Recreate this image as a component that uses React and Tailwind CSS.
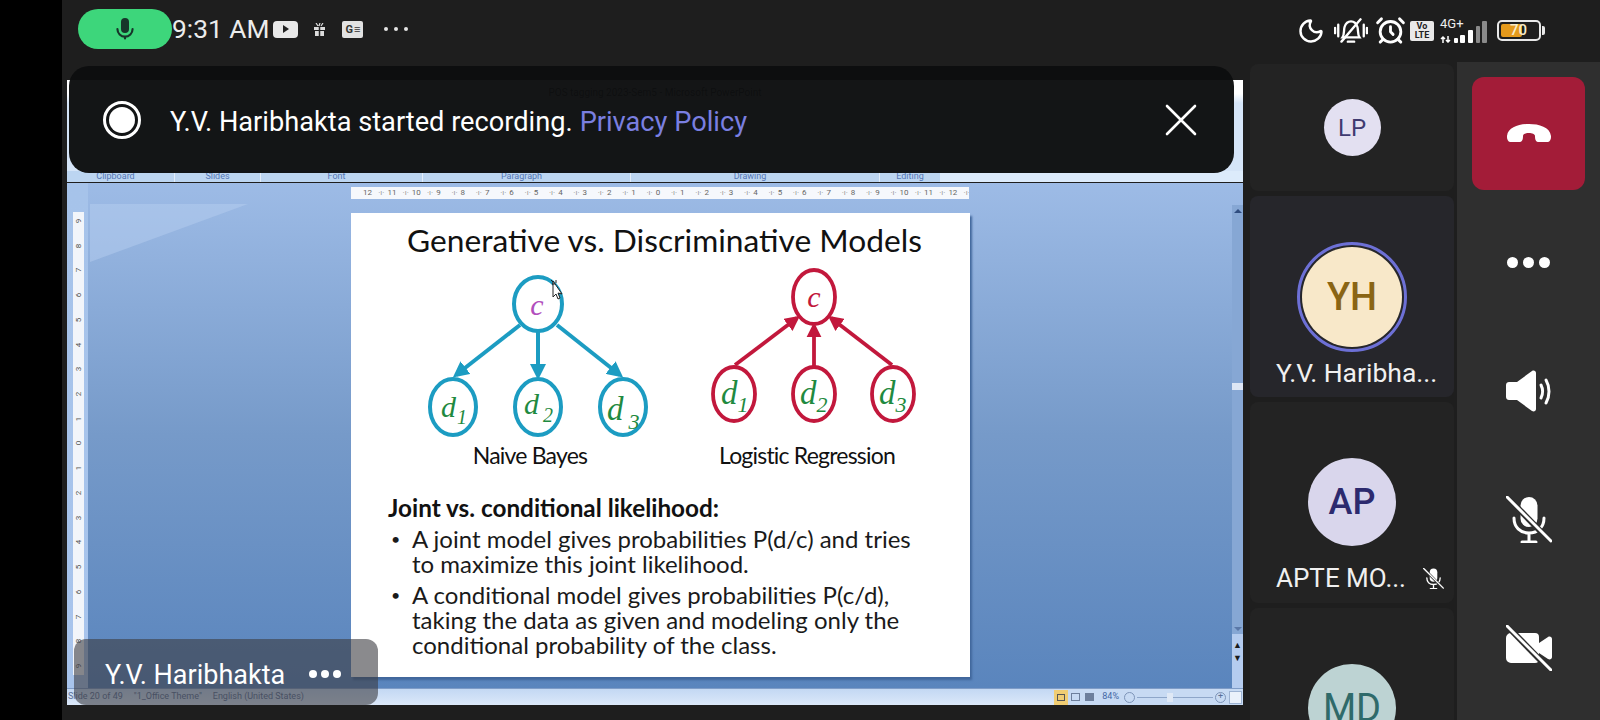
import { AlarmClock, Moon } from 'lucide-react';

const rulerTop = [12, 11, 10, 9, 8, 7, 6, 5, 4, 3, 2, 1, 0, 1, 2, 3, 4, 5, 6, 7, 8, 9, 10, 11, 12];
const rulerSide = [9, 8, 7, 6, 5, 4, 3, 2, 1, 0, 1, 2, 3, 4, 5, 6, 7, 8, 9];
const ribbonGroups = [
  { label: 'Clipboard', w: 'w-[108px] pr-[10px]' },
  { label: 'Slides', w: 'w-[86px]' },
  { label: 'Font', w: 'w-[162px] pr-[10px]' },
  { label: 'Paragraph', w: 'w-[208px] pr-[10px]' },
  { label: 'Drawing', w: 'w-[249px] pr-[10px]' },
];

function MicGlyph({ className }) {
  return (
    <svg viewBox="0 0 24 28" className={className}>
      <rect x="7.5" y="1" width="9" height="17" rx="4.5" fill="currentColor" />
      <path d="M3.5 13.5a8.5 8.5 0 0 0 17 0" fill="none" stroke="currentColor" strokeWidth="2.4" strokeLinecap="round" />
      <path d="M12 22v3" stroke="currentColor" strokeWidth="2.4" />
    </svg>
  );
}

function MutedMic({ className }) {
  return (
    <svg viewBox="0 0 46 47" className={className} fill="none">
      <rect x="14.5" y="1" width="17" height="30" rx="8.5" fill="white" />
      <path d="M8 22c0 9 6 15 15 15s15-6 15-15M23 37v9M16 46h14" stroke="white" strokeWidth="3" strokeLinecap="round" />
      <path d="M3 3l41 42" stroke="#2f2f2f" strokeWidth="6" />
      <path d="M1 1l44 44" stroke="white" strokeWidth="3" strokeLinecap="round" />
    </svg>
  );
}

function Avatar({ initials, className, ring }) {
  const circle = (
    <div className={`flex shrink-0 items-center justify-center rounded-full ${className}`}>{initials}</div>
  );
  if (!ring) return circle;
  return <div className="rounded-full border-[3px] border-[#6d70d6] p-[2px]">{circle}</div>;
}

function StatusIcons() {
  return (
    <div className="ml-auto mr-[55px] mt-[3px] flex items-center text-white">
      <Moon className="h-[28px] w-[28px]" strokeWidth={2.1} />
      <svg viewBox="0 0 32 26" className="ml-[9px] h-[28px] w-[34px]" fill="none" stroke="white" strokeWidth="2.2" strokeLinecap="round">
        <path d="M8 19c2-3 1-7 2-10 1-3 3-5 6-5s5 2 6 5c1 3 0 7 2 10z" />
        <path d="M13 23h6M7 23L25 2M1 10v5M4 7v11M28 7v11M31 10v5" />
      </svg>
      <AlarmClock className="ml-[7px] h-[31px] w-[31px]" strokeWidth={2.2} />
      <div className="ml-[4px] flex h-[20px] w-[24px] flex-col items-center justify-center rounded-[2px] bg-[#e9e9e9] text-[9px] font-bold leading-[9px] text-[#222]">
        <span>Vo</span>
        <span>LTE</span>
      </div>
      <div className="relative ml-[6px] h-[24px] w-[47px]">
        <span className="absolute -top-[2px] left-0 text-[13px] leading-[13px] text-[#eee]">4G+</span>
        <svg viewBox="0 0 47 22" className="absolute left-0 top-[2px] h-[22px] w-[47px]">
          <path d="M3 16v6M1 18l2-2 2 2M8 15v6M6 19l2 2 2-2" fill="none" stroke="white" strokeWidth="1.5" />
          <rect x="14" y="17" width="4" height="5" rx="1" fill="white" />
          <rect x="20" y="14" width="5" height="8" rx="1" fill="white" />
          <rect x="28" y="9" width="5" height="13" rx="1" fill="white" />
          <rect x="36" y="5" width="4" height="17" rx="1" fill="#8a8a8a" />
          <rect x="42" y="0" width="5" height="22" rx="1" fill="#8a8a8a" />
        </svg>
      </div>
      <div className="ml-[10px] flex items-center">
        <div className="relative h-[21px] w-[44px] rounded-[5px] border-2 border-[#e8e8e8] p-[2px]">
          <div className="h-full w-[21px] rounded-[2px] bg-[#e59a1c]" />
          <span className="absolute inset-y-0 left-[11px] flex items-center text-[15px] font-medium text-[#f8ecc9]">70</span>
        </div>
        <div className="ml-[1px] h-[9px] w-[3px] rounded-r-[2px] bg-[#e8e8e8]" />
      </div>
    </div>
  );
}

function TopBar() {
  return (
    <header className="flex h-[62px] shrink-0 items-center pb-[4px] text-white">
      <div className="ml-[16px] flex h-[40px] w-[94px] items-center justify-center rounded-full bg-[#3dd67b] text-[#17352a]">
        <MicGlyph className="h-[25px] w-[22px]" />
      </div>
      <span className="text-[26.3px] leading-none text-[#ececec]">9:31 AM</span>
      <div className="ml-[4px] flex h-[17px] w-[25px] items-center justify-center rounded-[4px] bg-[#e8e8e8]">
        <div className="ml-[1px] h-0 w-0 border-y-[4px] border-l-[6px] border-y-transparent border-l-[#222]" />
      </div>
      <svg viewBox="0 0 13 13" className="ml-[15px] h-[13px] w-[13px]">
        <path d="M3 0l2 3M7 0L6 3M10 0L8 3" stroke="#ddd" strokeWidth="1.2" />
        <path d="M1 4h11v3H1zM2 8h9v5H2z" fill="#ddd" />
        <path d="M6.5 4v9" stroke="#222" strokeWidth="1.5" />
      </svg>
      <div className="ml-[16px] flex h-[17px] w-[21px] items-center justify-center gap-[1px] rounded-[2px] bg-[#e2e2e2] text-[11px] font-bold leading-none text-[#333]">
        G<span className="text-[11px] leading-none">≡</span>
      </div>
      <div className="ml-[21px] flex gap-[6px]">
        <div className="h-[4px] w-[4px] rounded-full bg-[#e4e4e4]" />
        <div className="h-[4px] w-[4px] rounded-full bg-[#e4e4e4]" />
        <div className="h-[4px] w-[4px] rounded-full bg-[#e4e4e4]" />
      </div>
      <StatusIcons />
    </header>
  );
}

function Diagram() {
  return (
    <svg viewBox="351 262 619 213" className="h-[213px] w-[619px] shrink-0">
      <defs>
        <marker id="arrowBlue" markerWidth="4" markerHeight="4" refX="3" refY="2" orient="auto">
          <path d="M0 0L4 2L0 4z" fill="#1c9cc2" />
        </marker>
        <marker id="arrowRed" markerWidth="4" markerHeight="4" refX="3" refY="2" orient="auto">
          <path d="M0 0L4 2L0 4z" fill="#c2183c" />
        </marker>
      </defs>
      <g fill="none" stroke="#1c9cc2" strokeWidth="4">
        <ellipse cx="538" cy="304" rx="24" ry="27" />
        <ellipse cx="453" cy="407" rx="23" ry="28" />
        <ellipse cx="538" cy="407" rx="23" ry="28" />
        <ellipse cx="623" cy="407" rx="23" ry="28" />
        <path d="M520 325L456 375" markerEnd="url(#arrowBlue)" />
        <path d="M538 332V376" markerEnd="url(#arrowBlue)" />
        <path d="M557 325L620 375" markerEnd="url(#arrowBlue)" />
      </g>
      <g fill="none" stroke="#c2183c" strokeWidth="3.8">
        <ellipse cx="814" cy="297" rx="21" ry="27" />
        <ellipse cx="734" cy="394" rx="21" ry="27" />
        <ellipse cx="814" cy="394" rx="21" ry="27" />
        <ellipse cx="893" cy="394" rx="21" ry="27" />
        <path d="M735 365L797 318" markerEnd="url(#arrowRed)" />
        <path d="M814 366V326" markerEnd="url(#arrowRed)" />
        <path d="M892 365L831 318" markerEnd="url(#arrowRed)" />
      </g>
      <g fontFamily="'Liberation Serif', serif" fontStyle="italic">
        <text x="537" y="315" fontSize="30" fill="#b24fbd" textAnchor="middle">c</text>
        <text x="814" y="307" fontSize="30" fill="#c2183c" textAnchor="middle">c</text>
        <g fill="#1f8a40" fontSize="30">
          <text x="441" y="417">d<tspan dx="1" dy="7" fontSize="20">1</tspan></text>
          <text x="524" y="414">d<tspan dx="4" dy="8" fontSize="20">2</tspan></text>
          <text x="607" y="420" fontSize="33">d<tspan dx="5" dy="9" fontSize="22">3</tspan></text>
          <text x="721" y="404" fontSize="33">d<tspan dy="8" fontSize="22">1</tspan></text>
          <text x="800" y="404" fontSize="33">d<tspan dy="8" fontSize="22">2</tspan></text>
          <text x="879" y="404" fontSize="33">d<tspan dy="8" fontSize="22">3</tspan></text>
        </g>
      </g>
      <g fontFamily="Lato, sans-serif" fontSize="23" fill="#111" textAnchor="middle" letterSpacing="-0.8">
        <text x="530" y="464">Naive Bayes</text>
        <text x="807" y="464">Logistic Regression</text>
      </g>
      <path d="M553 281l9 13-4-1 2 5-2 1-2-5-3 3z" fill="white" stroke="#222" strokeWidth="1" />
      <path d="M556 280v3M552 284h3M551 280l2 2" stroke="#222" strokeWidth="1" />
    </svg>
  );
}

function Slide() {
  return (
    <section className="mt-[14px] flex h-[464px] w-[619px] flex-col bg-white font-['Lato',sans-serif] text-[#1a1a1a] shadow-[2px_3px_2px_#41679c]">
      <h1 className="ml-[8px] mt-[7px] h-[42px] text-center text-[31.7px] leading-[40px] text-[#111]">
        Generative vs. Discriminative Models
      </h1>
      <Diagram />
      <div className="ml-[37px] mt-[18px]">
        <p className="text-[24.3px] font-bold leading-[30px] text-[#111]">Joint vs. conditional likelihood:</p>
        <ul className="mt-[3px] text-[24px] leading-[25px]">
          <li className="relative pl-[24px] before:absolute before:left-[3px] before:text-[16px] before:content-['•']">
            A joint model gives probabilities P(d/c) and tries
            <br />
            to maximize this joint likelihood.
          </li>
          <li className="relative mt-[6px] pl-[24px] before:absolute before:left-[3px] before:text-[16px] before:content-['•']">
            A conditional model gives probabilities P(c/d),
            <br />
            taking the data as given and modeling only the
            <br />
            conditional probability of the class.
          </li>
        </ul>
      </div>
    </section>
  );
}

function Ribbon() {
  return (
    <>
      <div className="flex h-[92px] shrink-0 justify-center bg-gradient-to-b from-white from-[15%] to-[#d5e5f8] to-[25%] pt-[5px] text-[10px] text-[#4a4a4a]">
        POS tagging 2023-Sem5 - Microsoft PowerPoint
      </div>
      <div className="-mt-px flex h-[11px] shrink-0 bg-[#dcebfb] text-[9px] leading-[11px] text-[#5577b5]">
        {ribbonGroups.map((group) => (
          <div key={group.label} className={`${group.w} border-r border-[#e3eefb] bg-[#bcd5f1] text-center`}>
            {group.label}
          </div>
        ))}
        <div className="w-[60px] bg-[#bcd5f1] text-center">Editing</div>
      </div>
    </>
  );
}

function Workspace() {
  return (
    <div className="mt-px flex min-h-0 flex-1 bg-gradient-to-b from-[#9dbbe6] via-[#769ac9] to-[#5a85bd]">
      <div className="w-[21px] shrink-0 bg-gradient-to-b from-[#a6c3ea] to-[#a8c4ec] pl-[6px] pt-[29px]">
        <div className="flex h-[463px] w-[11px] flex-col justify-between bg-[#f2f5fa] py-[4px] text-center text-[8px] leading-[10px] text-[#555]">
          {rulerSide.map((n, i) => (
            <span key={i} className="-rotate-90">{n}</span>
          ))}
        </div>
      </div>
      <div className="relative flex-1 pl-[263px] pt-[4px]">
        <div className="absolute left-[2px] top-[21px] h-[58px] w-[158px] bg-[#b6cdf0]/50 [clip-path:polygon(0_0,100%_0,0_100%)]" />
        <div className="relative flex h-[12px] w-[618px] items-center overflow-hidden bg-[#f6f8fc] pl-[12px] text-[8px] text-[#666]">
          {rulerTop.map((n, i) => (
            <span key={i} className="flex w-[24.4px] shrink-0 items-center justify-between pr-[3px]">
              {n}
              <span className="text-[#999]">·ı·</span>
            </span>
          ))}
        </div>
        <div className="relative">
          <Slide />
        </div>
      </div>
      <div className="flex w-[11px] shrink-0 flex-col pt-[22px]">
        <div className="flex h-[437px] flex-col items-center bg-[#86a7d4] pt-[4px]">
          <div className="h-0 w-0 border-x-[4px] border-b-[4px] border-x-transparent border-b-[#2f4d80]" />
          <div className="mt-[170px] h-[7px] w-full bg-[#dde6f4]" />
          <div className="mb-[3px] mt-auto h-0 w-0 border-x-[4px] border-t-[4px] border-x-transparent border-t-[#5a78a8]" />
        </div>
        <div className="flex flex-col items-center gap-[3px] bg-[#b5ccef] pb-[25px] pt-[6px] text-[9px] leading-[10px] text-[#1c1c1c]">
          <span>▲</span>
          <span>▼</span>
        </div>
      </div>
    </div>
  );
}

function StatusBar() {
  return (
    <div className="flex h-[17px] shrink-0 items-center border-t border-[#7f9cc7] bg-gradient-to-b from-[#c3d8f3] to-[#dbe8f9] text-[9px] text-[#5a6f96]">
      <span className="ml-[1px]">Slide 20 of 49</span>
      <span className="ml-[11px]">"1_Office Theme"</span>
      <span className="ml-[11px]">English (United States)</span>
      <div className="ml-auto flex h-full items-center bg-[#c7daf3] pr-[1px]">
        <div className="flex h-[15px] w-[14px] items-center justify-center bg-[#f0cd73]">
          <div className="h-[7px] w-[8px] border border-[#555]" />
        </div>
        <div className="ml-[3px] h-[8px] w-[9px] border border-[#6d7f9c]" />
        <div className="ml-[5px] h-[8px] w-[9px] bg-[#6d7f9c]" />
        <span className="ml-[8px] text-[#4568a5]">84%</span>
        <div className="ml-[5px] h-[11px] w-[11px] rounded-full border border-[#7d94b8]" />
        <div className="relative mx-[2px] h-px w-[76px] bg-[#8ea6c9]">
          <div className="absolute -top-[4px] left-[30px] h-[9px] w-[6px] bg-[#dfe8f5]" />
        </div>
        <div className="flex h-[11px] w-[11px] items-center justify-center rounded-full border border-[#7d94b8] text-[9px]">+</div>
        <div className="ml-[3px] h-[13px] w-[13px] border border-[#9db3d3] bg-[#eaf1fb]" />
      </div>
    </div>
  );
}

function MainStage() {
  return (
    <main className="relative w-[1188px] shrink-0 pl-[5px] pt-[18px]">
      <div className="flex h-[625px] w-[1176px] flex-col overflow-hidden">
        <Ribbon />
        <Workspace />
        <StatusBar />
      </div>

      <div className="absolute left-[7px] top-[4px] flex h-[107px] w-[1165px] items-center rounded-[20px] bg-[#0c0d0e]/[0.97] pl-[34px] text-[27.2px] text-white">
        <div className="mt-[1px] flex h-[38px] w-[38px] items-center justify-center rounded-full border-[3px] border-white">
          <div className="h-[26px] w-[26px] rounded-full bg-white" />
        </div>
        <span className="ml-[29px] mt-[5px]">Y.V. Haribhakta started recording.</span>
        <span className="ml-[7px] mt-[5px] text-[#7a7fe0]">Privacy Policy</span>
        <svg viewBox="0 0 32 32" className="ml-auto mr-[37px] h-[32px] w-[32px]">
          <path d="M2 2l28 28M30 2L2 30" stroke="white" strokeWidth="2.6" strokeLinecap="round" />
        </svg>
      </div>

      <div className="absolute left-[12px] top-[577px] flex h-[66px] w-[304px] items-start rounded-[12px] bg-[#3c3c41]/60 pl-[31px] pt-[16px] text-[27px] leading-[40px] text-white">
        Y.V. Haribhakta
        <div className="ml-[24px] mt-[15px] flex gap-[4px]">
          <div className="h-[8px] w-[8px] rounded-full bg-white" />
          <div className="h-[8px] w-[8px] rounded-full bg-white" />
          <div className="h-[8px] w-[8px] rounded-full bg-white" />
        </div>
      </div>
    </main>
  );
}

function Tiles() {
  return (
    <aside className="flex w-[207px] shrink-0 flex-col gap-[5px] overflow-hidden pr-[3px] pt-[2px] leading-[30px] text-[#f0f0f0]">
      <div className="flex h-[127px] shrink-0 items-center justify-center rounded-[8px] bg-[#232323]">
        <Avatar initials="LP" className="h-[57px] w-[57px] bg-[#e3e0f1] text-[24px] text-[#3f3b70]" />
      </div>
      <div className="flex h-[201px] shrink-0 flex-col items-center rounded-[8px] bg-[#26262b] pt-[46px]">
        <Avatar ring initials="YH" className="h-[100px] w-[100px] bg-[#f8e8c9] text-[38px] font-medium text-[#8a6514]" />
        <span className="mt-[6px] w-full pl-[26px] text-[26.5px]">Y.V. Haribha...</span>
      </div>
      <div className="flex h-[201px] shrink-0 flex-col items-center rounded-[8px] bg-[#232323] pt-[56px]">
        <Avatar initials="AP" className="h-[88px] w-[88px] bg-[#d9d6ec] text-[36px] font-medium text-[#2c2a6e]" />
        <div className="mt-[17px] flex w-full items-center pl-[26px] text-[26px]">
          APTE MO...
          <MutedMic className="ml-[17px] h-[21px] w-[21px]" />
        </div>
      </div>
      <div className="flex h-[200px] shrink-0 flex-col items-center rounded-[8px] bg-[#232323] pt-[56px]">
        <Avatar initials="MD" className="h-[88px] w-[88px] bg-[#bdd3d3] text-[38px] text-[#2f6a6a]" />
      </div>
    </aside>
  );
}

function Controls() {
  return (
    <aside className="flex flex-1 flex-col items-center bg-[#2f2f2f] pt-[15px]">
      <button className="flex h-[113px] w-[113px] shrink-0 items-center justify-center rounded-[12px] bg-[#a31c38]">
        <svg viewBox="0 0 46 20" className="-mt-[2px] h-[20px] w-[46px]">
          <path d="M1 13C2 4 13 1 23 1s21 3 22 12c.3 3-1 6-3 6h-9c-3 0-4-2-4-6 0-2-3-3-6-3s-6 1-6 3c0 4-1 6-4 6H4c-2 0-3.3-3-3-6z" fill="white" />
        </svg>
      </button>
      <div className="mt-[67px] flex gap-[5px]">
        <div className="h-[11px] w-[11px] rounded-full bg-white" />
        <div className="h-[11px] w-[11px] rounded-full bg-white" />
        <div className="h-[11px] w-[11px] rounded-full bg-white" />
      </div>
      <svg viewBox="0 0 45 42" className="mt-[102px] h-[42px] w-[45px]">
        <path d="M3 12h8L26 1c2-1 4 0 4 2v36c0 2-2 3-4 2L11 30H3c-1.5 0-3-1-3-3V15c0-2 1.5-3 3-3z" fill="white" />
        <path d="M35 15c2 4 2 9 0 13M40 10c4 7 4 16 0 23" fill="none" stroke="white" strokeWidth="3" strokeLinecap="round" />
      </svg>
      <MutedMic className="mt-[84px] h-[47px] w-[46px]" />
      <svg viewBox="0 0 46 46" className="mt-[82px] h-[46px] w-[46px]">
        <path d="M5 8h24a4 4 0 0 1 4 4v6l9-6c2-1 4 0 4 2v18c0 2-2 3-4 2l-9-6v6a4 4 0 0 1-4 4H5a5 5 0 0 1-5-5V13a5 5 0 0 1 5-5z" fill="white" />
        <path d="M3 3l41 42" stroke="#2f2f2f" strokeWidth="6" />
        <path d="M1 1l44 44" stroke="white" strokeWidth="3" strokeLinecap="round" />
      </svg>
    </aside>
  );
}

export default function App() {
  return (
    <div className="flex h-[720px] w-[1600px] overflow-hidden bg-black font-['Roboto',sans-serif]">
      <div className="w-[62px] shrink-0" />
      <div className="flex min-w-0 flex-1 flex-col bg-[#1e1e1e]">
        <TopBar />
        <div className="flex min-h-0 flex-1">
          <MainStage />
          <Tiles />
          <Controls />
        </div>
      </div>
    </div>
  );
}
